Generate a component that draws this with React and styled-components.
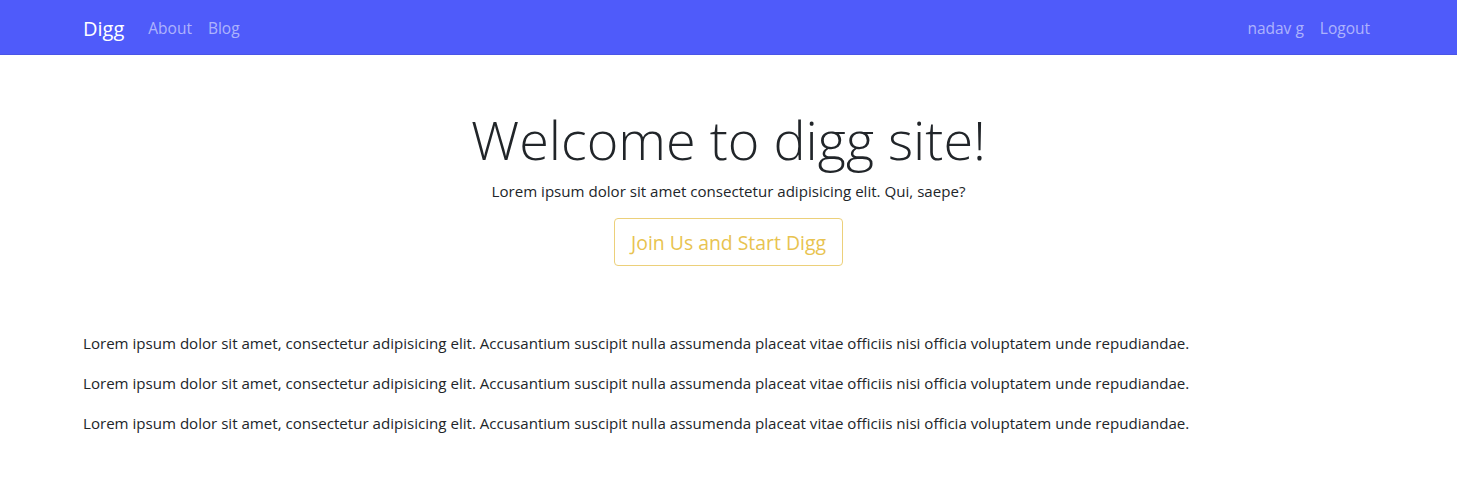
import styled, {createGlobalStyle} from 'styled-components';

const GlobalStyle = createGlobalStyle`
  * { box-sizing: border-box; }
  body {
    margin: 0;
    background: #fff;
    color: #212529;
    font-family: "Open Sans", "Noto Sans", sans-serif;
    font-size: 15.1px;
    line-height: 1.5;
  }
`;

const links = ['About', 'Blog'];
const userLinks = ['nadav g', 'Logout'];
const paragraph = 'Lorem ipsum dolor sit amet, consectetur adipisicing elit. Accusantium suscipit nulla assumenda placeat vitae officiis nisi officia voluptatem unde repudiandae.';

const App = () => {
  return (
    <>
      <GlobalStyle />
      <Navbar>
        <NavInner>
          <NavGroup>
            <Brand href="#">Digg</Brand>
            {links.map(link => <NavLink key={link} href="#">{link}</NavLink>)}
          </NavGroup>
          <NavGroup>
            {userLinks.map(link => <NavLink key={link} href="#">{link}</NavLink>)}
          </NavGroup>
        </NavInner>
      </Navbar>
      <Hero>
        <Title>Welcome to digg site!</Title>
        <Lead>Lorem ipsum dolor sit amet consectetur adipisicing elit. Qui, saepe?</Lead>
        <JoinButton>Join Us and Start Digg</JoinButton>
      </Hero>
      <Content>
        {[1, 2, 3].map(n => <Text key={n}>{paragraph}</Text>)}
      </Content>
    </>
  );
};

export default App;

const Navbar = styled.nav`
  background-color: #4f5bfa;
  border-bottom: 1px solid #4a55e6;
  height: 55px;
`;

const NavInner = styled.div`
  display: flex;
  align-items: center;
  justify-content: space-between;
  height: 100%;
  padding: 3px 79px 0 83px;
`;

const NavGroup = styled.div`
  display: flex;
  align-items: center;
`;

const Brand = styled.a`
  color: #fff;
  font-size: 20px;
  text-decoration: none;
  margin-right: 16px;
`;

const NavLink = styled.a`
  color: rgba(255, 255, 255, 0.55);
  font-size: 15.5px;
  text-decoration: none;
  padding: 0 8px;
`;

const Hero = styled.section`
  display: flex;
  flex-direction: column;
  align-items: center;
  padding-top: 46px;
`;

const Title = styled.h1`
  margin: 0 0 1px;
  font-size: 54px;
  font-weight: 300;
  line-height: 77px;
  color: #212529;
`;

const Lead = styled.p`
  margin: 0 0 15px;
  line-height: 24px;
`;

const JoinButton = styled.button`
  height: 48px;
  padding: 0 16px;
  font-family: inherit;
  font-size: 19.4px;
  color: #e8c34f;
  background: transparent;
  border: 1px solid #ecd07a;
  border-radius: 4px;
  cursor: pointer;
`;

const Content = styled.div`
  padding: 65px 83px 0;
`;

const Text = styled.p`
  margin: 0 0 16px;
  line-height: 24px;
`;
